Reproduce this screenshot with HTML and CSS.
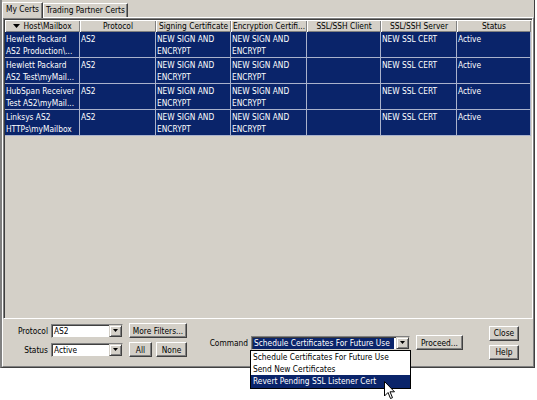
FILE: index.html
```html
<!DOCTYPE html>
<html>
<head>
<meta charset="utf-8">
<link rel="stylesheet" href="styles.css">
</head>
<body>
<div class="window">
  <div class="tabs">
    <div class="tab tab-active">My Certs</div>
    <div class="tab tab-wide">Trading Partner Certs</div>
  </div>
  <div class="panel">
    <div class="scroll">
      <div class="grid">
        <div class="th"><svg class="sort" width="7" height="4" viewBox="0 0 7 4"><polygon points="0,0 7,0 3.5,4" fill="#000"/></svg>Host\Mailbox</div>
        <div class="th">Protocol</div>
        <div class="th">Signing Certificate</div>
        <div class="th">Encryption Certifi...</div>
        <div class="th">SSL/SSH Client</div>
        <div class="th">SSL/SSH Server</div>
        <div class="th">Status</div>

        <div class="td">Hewlett Packard<br>AS2 Production\...</div>
        <div class="td">AS2</div>
        <div class="td">NEW SIGN AND<br>ENCRYPT</div>
        <div class="td">NEW SIGN AND<br>ENCRYPT</div>
        <div class="td"></div>
        <div class="td">NEW SSL CERT</div>
        <div class="td">Active</div>

        <div class="td">Hewlett Packard<br>AS2 Test\myMail...</div>
        <div class="td">AS2</div>
        <div class="td">NEW SIGN AND<br>ENCRYPT</div>
        <div class="td">NEW SIGN AND<br>ENCRYPT</div>
        <div class="td"></div>
        <div class="td">NEW SSL CERT</div>
        <div class="td">Active</div>

        <div class="td">HubSpan Receiver<br>Test AS2\myMail...</div>
        <div class="td">AS2</div>
        <div class="td">NEW SIGN AND<br>ENCRYPT</div>
        <div class="td">NEW SIGN AND<br>ENCRYPT</div>
        <div class="td"></div>
        <div class="td">NEW SSL CERT</div>
        <div class="td">Active</div>

        <div class="td">Linksys AS2<br>HTTPs\myMailbox</div>
        <div class="td">AS2</div>
        <div class="td">NEW SIGN AND<br>ENCRYPT</div>
        <div class="td">NEW SIGN AND<br>ENCRYPT</div>
        <div class="td"></div>
        <div class="td">NEW SSL CERT</div>
        <div class="td">Active</div>
      </div>
    </div>
    <div class="controls">
      <div class="filters">
        <span class="lbl">Protocol</span>
        <div class="select"><span class="value">AS2</span><span class="arrow"><svg width="5" height="3" viewBox="0 0 5 3"><polygon points="0,0 5,0 2.5,3" fill="#000"/></svg></span></div>
        <div class="btn-cell"><button class="btn btn-more">More Filters...</button></div>
        <span class="lbl">Status</span>
        <div class="select"><span class="value">Active</span><span class="arrow"><svg width="5" height="3" viewBox="0 0 5 3"><polygon points="0,0 5,0 2.5,3" fill="#000"/></svg></span></div>
        <div class="btn-cell"><button class="btn btn-all">All</button><button class="btn btn-none">None</button></div>
      </div>
      <div class="command">
        <span class="lbl lbl-cmd">Command</span>
        <div class="combo">
          <div class="select select-wide"><span class="value value-sel">Schedule Certificates For Future Use</span><span class="arrow"><svg width="5" height="3" viewBox="0 0 5 3"><polygon points="0,0 5,0 2.5,3" fill="#000"/></svg></span></div>
          <ul class="list">
            <li class="item">Schedule Certificates For Future Use</li>
            <li class="item">Send New Certificates</li>
            <li class="item item-hi">Revert Pending SSL Listener Cert</li>
          </ul>
        </div>
        <button class="btn btn-proceed">Proceed...</button>
      </div>
      <div class="side">
        <button class="btn btn-side">Close</button>
        <button class="btn btn-side">Help</button>
      </div>
    </div>
  </div>
</div>
<svg class="cursor" width="12" height="19" viewBox="0 0 12 19"><polygon points="0.5,0.5 0.5,15 4,11.5 6.5,17.5 8.5,16.7 6,10.8 10.5,10.8" fill="#fff" stroke="#000" stroke-width="1" stroke-linejoin="miter"/></svg>
</body>
</html>
```

FILE: styles.css
```css
* { box-sizing: border-box; }
html, body { margin: 0; padding: 0; background: #fff; }
body {
  font-family: "DejaVu Sans Condensed", "Liberation Sans", sans-serif;
  font-size: 8.3px;
  color: #000;
  width: 537px;
  height: 400px;
  overflow: hidden;
  position: relative;
}

.window {
  width: 535px;
  height: 368px;
  background: #d4d0c8;
  border-left: 2px solid #808080;
  border-right: 1px solid #404040;
  border-bottom: 1px solid #404040;
  display: flex;
  flex-direction: column;
}

/* tabs */
.tabs {
  height: 17px;
  display: flex;
  align-items: flex-end;
}
.tab {
  height: 14px;
  width: 41px;
  line-height: 12px;
  text-align: center;
  white-space: nowrap;
  border-top: 1px solid #fff;
  border-left: 1px solid #fff;
  border-right: 1px solid #404040;
  box-shadow: inset -1px 0 0 #808080;
}
.tab-active {
  height: 16px;
  margin-bottom: -1px;
  position: relative;
  z-index: 1;
  background: #d4d0c8;
  line-height: 13px;
}
.tab-wide { width: 85px; }

/* panel */
.panel {
  flex: 1;
  display: flex;
  flex-direction: column;
  border-top: 1px solid #fff;
  border-left: 1px solid #fff;
  border-right: 1px solid #808080;
  border-bottom: 1px solid #808080;
}

.scroll {
  height: 301px;
  border: 1px solid;
  border-color: #808080 #fff #fff #808080;
  box-shadow: inset 1px 1px 0 #404040;
  padding: 1px 0 0 1px;
  background: #d4d0c8;
}

.grid {
  display: grid;
  grid-template-columns: 75px 76px 75px 76px 74px 76px 74px;
  grid-template-rows: 12px repeat(4, 26px);
}
.th {
  line-height: 12px;
  text-align: center;
  white-space: nowrap;
  overflow: hidden;
  background: #d4d0c8;
  box-shadow: inset 1px 1px 0 #fff, inset -1px -1px 0 #808080;
}
.sort { margin-right: 3px; vertical-align: 1px; }
.td {
  background: #0a246a;
  color: #fff;
  line-height: 12px;
  padding: 1px 0 0 1px;
  border-right: 1px solid #aab2cc;
  border-bottom: 1px solid #aab2cc;
  white-space: nowrap;
  overflow: hidden;
}

/* controls */
.controls {
  height: 47px;
  display: flex;
  align-items: center;
}
.filters {
  align-self: flex-start;
  margin-top: 4px;
  display: grid;
  grid-template-columns: 45px 72px 61px;
  grid-template-rows: 15px 15px;
  column-gap: 3px;
  row-gap: 4px;
  align-items: center;
}
.lbl {
  text-align: right;
  white-space: nowrap;
  line-height: 14px;
}
.select {
  height: 14px;
  display: flex;
  background: #fff;
  border: 1px solid;
  border-color: #808080 #d4d0c8 #d4d0c8 #808080;
  box-shadow: inset 1px 1px 0 #404040;
}
.value {
  padding-left: 1px;
  margin-left: 1px;
  margin-top: 1px;
  line-height: 11px;
  white-space: nowrap;
  overflow: hidden;
}
.arrow {
  margin-left: auto;
  width: 13px;
  height: 12px;
  background: #d4d0c8;
  border: 1px solid;
  border-color: #d4d0c8 #404040 #404040 #d4d0c8;
  box-shadow: inset 1px 1px 0 #fff, inset -1px -1px 0 #808080;
  display: flex;
  align-items: center;
  justify-content: center;
}
.arrow svg { display: block; }

.btn-cell {
  display: flex;
  gap: 4px;
  padding-left: 3px;
}
.btn {
  font-family: inherit;
  font-size: 8.3px;
  color: #000;
  margin: 0;
  padding: 0;
  height: 15px;
  line-height: 12px;
  background: #d4d0c8;
  border: 1px solid;
  border-color: #fff #404040 #404040 #fff;
  box-shadow: inset -1px -1px 0 #808080;
  white-space: nowrap;
  text-align: center;
}
.btn-more { width: 58px; }
.btn-all { width: 23px; }
.btn-none { width: 31px; }

.command {
  display: flex;
  align-items: center;
  margin-left: 20px;
}
.lbl-cmd { width: 41px; }
.combo {
  position: relative;
  margin-left: 3px;
}
.select-wide { width: 159px; }
.value-sel {
  flex: 1;
  background: #0a246a;
  color: #fff;
  margin-right: 2px;
}
.btn-proceed { width: 47px; margin-left: 6px; }

.list {
  position: absolute;
  top: 14px;
  left: -1px;
  width: 161px;
  margin: 0;
  padding: 0;
  list-style: none;
  background: #fff;
  border: 1px solid #000;
  z-index: 5;
}
.item {
  height: 12.4px;
  line-height: 12px;
  padding-left: 2px;
  white-space: nowrap;
}
.item-hi {
  background: #0a246a;
  color: #fff;
}

.side {
  margin-left: 26px;
  display: flex;
  flex-direction: column;
  gap: 4px;
}
.btn-side { width: 30px; }

.cursor {
  position: absolute;
  left: 384px;
  top: 381px;
  z-index: 10;
}
```
